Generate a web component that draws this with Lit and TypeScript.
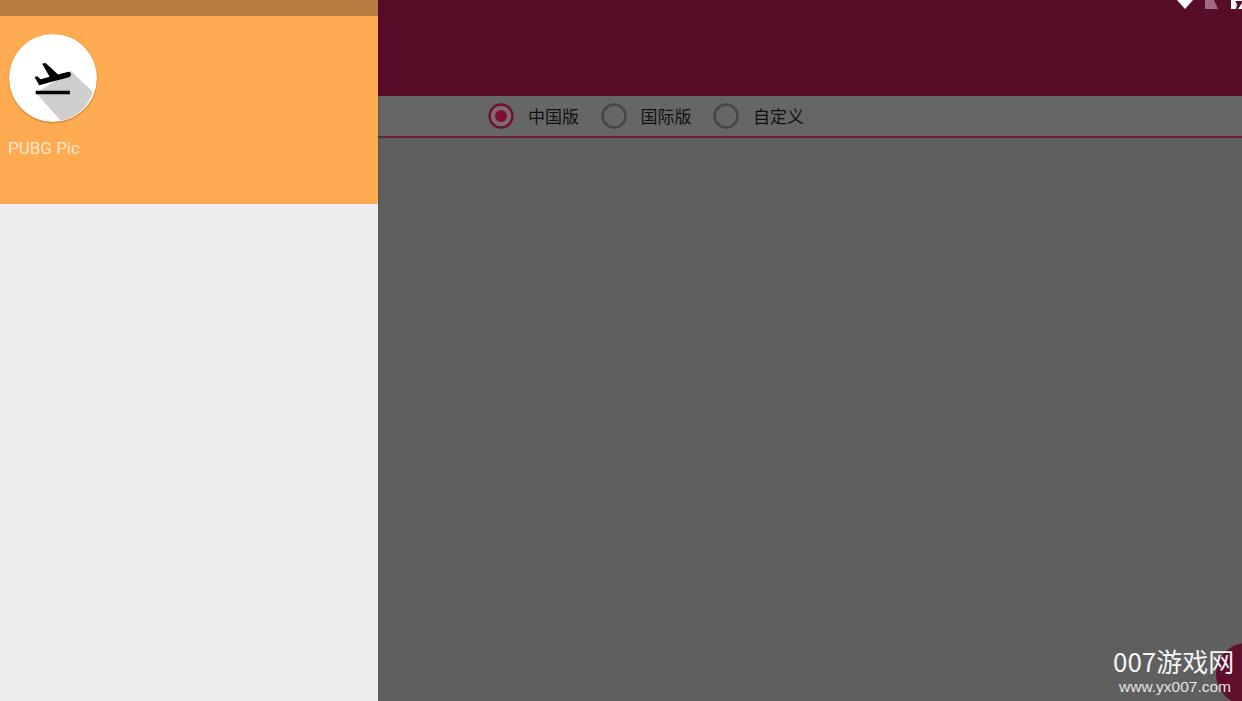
import { LitElement, html, svg, css } from "lit";
import { customElement } from "lit/decorators.js";

@customElement("app-root")
export class AppRoot extends LitElement {
  static styles = css`
    :host { display: block; width: 1242px; height: 701px; position: relative; overflow: hidden; background: #5f5f5f; font-family: "Liberation Sans", Roboto, "Noto Sans CJK SC", sans-serif; }
    .page { display: flex; height: 701px; }
    .drawer { width: 378px; flex: none; display: flex; flex-direction: column; background: #eeeeee; box-shadow: 1px 0 2px rgba(0,0,0,.08); z-index: 2; }
    .status { height: 16px; background: #b97d3f; }
    .head { height: 188px; background: #ffab51; box-sizing: border-box; padding: 18px 0 0 9px; }
    .avatar { width: 88px; height: 88px; display: block; border-radius: 50%; box-shadow: 0 1px 2px rgba(0,0,0,.25); }
    .name { margin: 16px 0 0 -1px; font: 17px/20px Roboto, "Liberation Sans", sans-serif; color: #ffe6cc; }
    .main { flex: 1; display: flex; flex-direction: column; min-width: 0; }
    .bar { height: 96px; background: #570d27; display: flex; justify-content: flex-end; gap: 12px; flex: none; box-shadow: 0 1px 3px rgba(0,0,0,.3); }
    .stat { display: block; height: 9px; }
    .radios { height: 42px; flex: none; background: #666666; border-bottom: 2px solid #6e2340; box-sizing: border-box; display: flex; align-items: center; padding: 0 0 0 110px; }
    .radio { display: flex; align-items: center; margin-right: 21.5px; font: 17px/20px "Noto Sans CJK SC", sans-serif; color: #111; }
    .ring { width: 26px; height: 26px; display: block; margin-right: 14px; }
    .body { flex: 1; background: #5f5f5f; }
    .fab { position: absolute; left: 1216px; top: 643px; width: 62px; height: 62px; border-radius: 50%; background: #5f0e2c; }
    .mark { position: absolute; left: 1113px; top: 646px; width: 129px; color: #f4f4f4; }
    .mark .big { font: 26px/30px "Noto Sans CJK SC", "DejaVu Sans", sans-serif; white-space: nowrap; }
    .mark .url { font: 15.5px/18px "Liberation Sans", sans-serif; color: #e4e4e4; margin: 2px 0 0 6px; white-space: nowrap; }
  `;

  private ring(on: boolean) {
    const c = on ? "#6e1234" : "#454545";
    return html`<svg class="ring" viewBox="0 0 26 26">
      <circle cx="13" cy="13" r="11.5" fill=${on ? "#7d6a72" : "none"} stroke=${c} stroke-width="2.4"></circle>
      ${on ? svg`<circle cx="13" cy="13" r="6" fill="#7e1038"></circle>` : ""}
    </svg>`;
  }

  render() {
    return html`
      <div class="page">
        <aside class="drawer">
          <div class="status"></div>
          <div class="head">
            <svg class="avatar" viewBox="0 0 88 88">
              <circle cx="44" cy="44" r="44" fill="#fff"></circle>
              <path d="M27 59 L52 87 A44 44 0 0 0 84 58 L62 37 Z" fill="#cfcfcf"></path>
              <g transform="translate(22.2 22.5) scale(1.8)">
                <path d="M2.5 19h19v2h-19zm19.57-9.36c-.21-.8-1.04-1.28-1.84-1.06L14.92 10l-6.9-6.43-1.93.51 4.14 7.17-4.97 1.33-1.97-1.54-1.45.39 1.82 3.16.77 1.33 1.6-.43 5.31-1.42 4.35-1.16L21 11.49c.81-.23 1.28-1.05 1.07-1.85z" fill="#000"></path>
              </g>
            </svg>
            <div class="name">PUBG Pic</div>
          </div>
        </aside>
        <main class="main">
          <header class="bar">
            <svg class="stat" width="16" viewBox="0 0 16 9"><path d="M0 0H16L8 9Z" fill="#fff"></path></svg>
            <svg class="stat" width="14" viewBox="0 0 14 9"><rect width="14" height="9" fill="#a06a85"></rect><path d="M9 0H14V9H13Z" fill="#570d27"></path></svg>
            <svg class="stat" width="11" viewBox="0 0 11 9"><rect width="11" height="9" fill="#fff"></rect><path d="M4 1H11V3L7 9H5L6 4Z" fill="#570d27"></path></svg>
          </header>
          <div class="radios">
            <label class="radio">${this.ring(true)}中国版</label>
            <label class="radio">${this.ring(false)}国际版</label>
            <label class="radio">${this.ring(false)}自定义</label>
          </div>
          <div class="body"></div>
        </main>
      </div>
      <div class="fab"></div>
      <div class="mark">
        <div class="big">007游戏网</div>
        <div class="url">www.yx007.com</div>
      </div>
    `;
  }
}
